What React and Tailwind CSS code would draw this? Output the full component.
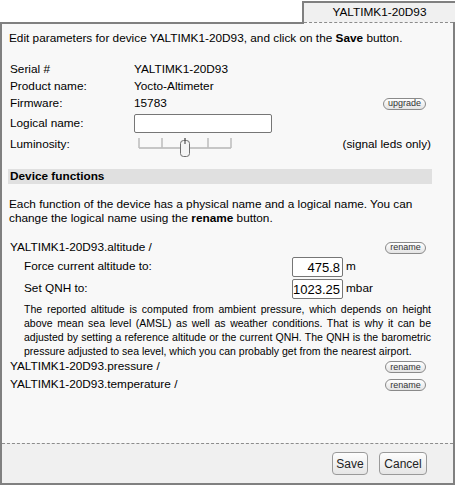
import React from "react";

const PillButton = ({ children, className = "" }) => (
  <button
    type="button"
    className={`flex h-[12px] items-center justify-center rounded-full border border-[#8a8a8a] bg-gradient-to-b from-white to-[#e4e4e4] text-[9px] leading-none text-[#333] ${className}`}
  >
    {children}
  </button>
);

const InfoRow = ({ label, children, height = "h-[17px]" }) => (
  <div className={`flex items-center pl-[2px] ${height}`}>
    <div className="w-[124px] shrink-0">{label}</div>
    <div className="flex flex-1 items-center">{children}</div>
  </div>
);

const FunctionRow = ({ name, height = "h-[18px]" }) => (
  <div className={`flex items-center justify-between pl-[2px] pr-[6px] ${height}`}>
    <span>{name}</span>
    <PillButton className="w-[41px]">rename</PillButton>
  </div>
);

const ValueRow = ({ label, value, unit }) => (
  <div className="flex h-[22px] items-center pl-[16px]">
    <div className="w-[268px] shrink-0">{label}</div>
    <input
      readOnly
      value={value}
      className="h-[20px] w-[51px] rounded-[2px] border border-[#767676] bg-white pr-[2px] text-right text-[13px] outline-none"
    />
    <span className="ml-[3px]">{unit}</span>
  </div>
);

const LuminositySlider = () => (
  <svg width="110" height="20" viewBox="0 0 110 20" className="block overflow-visible">
    <line x1="5" y1="13" x2="97" y2="13" stroke="#c6c6c6" strokeWidth="2" />
    {[5, 28, 51, 74, 97].map((x) => (
      <line key={x} x1={x} y1="3" x2={x} y2="13" stroke="#bdbdbd" strokeWidth="1.5" />
    ))}
    <rect x="46.5" y="5.5" width="9" height="16" rx="3" fill="#f4f4f4" stroke="#6e6e6e" />
    <line x1="51" y1="3" x2="51" y2="9" stroke="#555" strokeWidth="1.2" />
  </svg>
);

export default function App() {
  return (
    <div className="flex h-[485px] w-[455px] flex-col overflow-hidden bg-white font-['Liberation_Sans',Arial,sans-serif] text-[11.8px] text-black">
      <div className="flex h-[22px] shrink-0 justify-end">
        <div className="mt-px flex h-[21px] w-[153px] items-center justify-center border-l-2 border-t-2 border-[#808080] bg-[#f0f0f0]">
          YALTIMK1-20D93
        </div>
      </div>
      <div className="flex h-[2px] shrink-0">
        <div className="w-[304px] bg-[#808080]" />
        <div className="flex-1 border-t border-dashed border-[#8c8c8c] bg-[#f8f8f8]" />
        <div className="w-[2px] bg-[#808080]" />
      </div>

      <div className="flex flex-1 flex-col border-x-2 border-b-2 border-[#808080] bg-[#f8f8f8]">
        <div className="ml-[6px] w-[424px] flex-1 pt-[7px]">
          <p className="pl-px leading-[15px]">
            Edit parameters for device YALTIMK1-20D93, and click on the <b>Save</b> button.
          </p>

          <div className="mt-[15px]">
            <InfoRow label="Serial #">YALTIMK1-20D93</InfoRow>
            <InfoRow label="Product name:">Yocto-Altimeter</InfoRow>
            <InfoRow label="Firmware:">
              <span>15783</span>
              <PillButton className="ml-auto mr-[6px] w-[43px]">upgrade</PillButton>
            </InfoRow>
            <InfoRow label="Logical name:" height="h-[23px]">
              <input
                readOnly
                className="h-[19px] w-[138px] rounded-[2px] border border-[#767676] bg-white outline-none"
              />
            </InfoRow>
            <InfoRow label="Luminosity:" height="h-[20px]">
              <LuminositySlider />
              <span className="ml-auto pr-px">(signal leds only)</span>
            </InfoRow>
          </div>

          <div className="mt-[14px] flex h-[15px] items-center bg-[#e0e0e0] pl-[2px] font-bold">
            Device functions
          </div>

          <p className="mt-[13px] pl-px leading-[14px]">
            Each function of the device has a physical name and a logical name. You can change the
            logical name using the <b>rename</b> button.
          </p>

          <div className="mt-[14px]">
            <FunctionRow name="YALTIMK1-20D93.altitude /" height="h-[17px]" />
            <ValueRow label="Force current altitude to:" value="475.8" unit="m" />
            <ValueRow label="Set QNH to:" value="1023.25" unit="mbar" />
            <p className="mt-[2px] pl-[16px] pr-px text-justify text-[10.5px] leading-[14px]">
              The reported altitude is computed from ambient pressure, which depends on height above
              mean sea level (AMSL) as well as weather conditions. That is why it can be adjusted by
              setting a reference altitude or the current QNH. The QNH is the barometric pressure
              adjusted to sea level, which you can probably get from the nearest airport.
            </p>
            <FunctionRow name="YALTIMK1-20D93.pressure /" />
            <FunctionRow name="YALTIMK1-20D93.temperature /" />
          </div>
        </div>

        <div className="flex h-[40px] shrink-0 items-center justify-end gap-[11px] border-t border-dashed border-[#8c8c8c] bg-[#f0f0f0] pr-[26px]">
          <button
            type="button"
            className="h-[23px] w-[36px] rounded-[4px] border border-[#9a9a9a] bg-gradient-to-b from-[#fdfdfd] to-[#e6e6e6] text-[12px] text-[#222]"
          >
            Save
          </button>
          <button
            type="button"
            className="h-[23px] w-[48px] rounded-[4px] border border-[#9a9a9a] bg-gradient-to-b from-[#fdfdfd] to-[#e6e6e6] text-[12px] text-[#222]"
          >
            Cancel
          </button>
        </div>
      </div>
    </div>
  );
}
